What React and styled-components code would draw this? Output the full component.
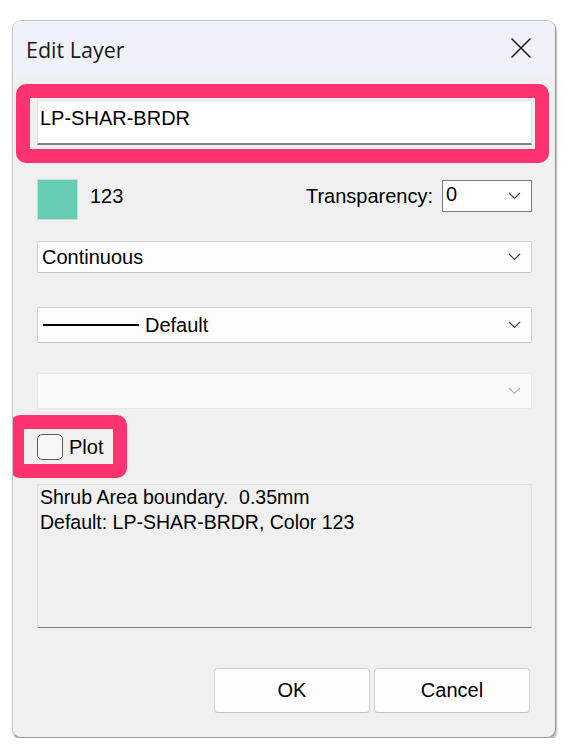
import styled, { createGlobalStyle } from "styled-components";

const GlobalStyle = createGlobalStyle`
  html, body {
    margin: 0;
    padding: 0;
    background: #ffffff;
  }
  body {
    font-family: "Liberation Sans", Arial, sans-serif;
    color: #000;
  }
`;

const PINK = "#ff3370";

function Chevron({ disabled }) {
  return (
    <svg width="13" height="8" viewBox="0 0 13 8">
      <path
        d="M1 1 L6.5 6.5 L12 1"
        fill="none"
        stroke={disabled ? "#b4b4b4" : "#444"}
        strokeWidth="1.2"
      />
    </svg>
  );
}

function CloseIcon() {
  return (
    <svg width="22" height="22" viewBox="0 0 22 22">
      <path
        d="M2 2 L20 20 M20 2 L2 20"
        stroke="#1c1c1c"
        strokeWidth="1.6"
        strokeLinecap="round"
      />
    </svg>
  );
}

export default function App() {
  return (
    <>
      <GlobalStyle />
      <Page>
        <Dialog>
          <TitleBar>
            <Title>Edit Layer</Title>
            <CloseButton>
              <CloseIcon />
            </CloseButton>
          </TitleBar>

          <Body>
            <NameHighlight>
              <NameInput>LP-SHAR-BRDR</NameInput>
            </NameHighlight>

            <ColorRow>
              <Swatch $color="#66cdb4" />
              <Label>123</Label>
              <Spacer />
              <Label>Transparency:</Label>
              <SmallCombo>
                <span>0</span>
                <Chevron />
              </SmallCombo>
            </ColorRow>

            <Combo $top={21} $height={32}>
              <ComboText>Continuous</ComboText>
              <Chevron />
            </Combo>

            <Combo $top={34} $height={36}>
              <ComboText>
                <LineSample />
                Default
              </ComboText>
              <Chevron />
            </Combo>

            <Combo $top={30} $height={36} $disabled>
              <ComboText />
              <Chevron disabled />
            </Combo>

            <PlotHighlight>
              <CheckBox />
              <Label>Plot</Label>
            </PlotHighlight>

            <Description>
              Shrub Area boundary.&nbsp; 0.35mm
              <br />
              Default: LP-SHAR-BRDR, Color 123
            </Description>

            <ButtonRow>
              <Button>OK</Button>
              <Button>Cancel</Button>
            </ButtonRow>
          </Body>
        </Dialog>
      </Page>
    </>
  );
}

const Page = styled.div`
  padding: 20px 0 0 12px;
`;

const Dialog = styled.div`
  width: 542px;
  background: #f0f0f0;
  border: 1px solid #c4c4c4;
  border-right-color: #9a9a9a;
  border-bottom-color: #9a9a9a;
  border-radius: 9px;
  box-shadow: 1px 3px 2px rgba(0, 0, 0, 0.28);
  overflow: hidden;
`;

const TitleBar = styled.div`
  height: 56px;
  background: #eff2f8;
  display: flex;
  align-items: center;
  justify-content: space-between;
  padding: 0 23px 0 13px;
`;

const Title = styled.div`
  font-family: "Open Sans", "Noto Sans", sans-serif;
  font-size: 21.5px;
  color: #1a1a1a;
  margin-top: 1px;
`;

const CloseButton = styled.div`
  display: flex;
  margin-top: -2px;
`;

const Body = styled.div`
  display: flex;
  flex-direction: column;
  padding: 7px 23px 24px 24px;
`;

const NameHighlight = styled.div`
  margin: 0 -17px 0 -21px;
  border: 14px solid ${PINK};
  border-radius: 10px;
  background: #f0f0f0;
  padding: 2px 3px 4px 7px;
`;

const NameInput = styled.div`
  background: #ffffff;
  border: 1px solid #e2e2e2;
  border-bottom: 2px solid #808080;
  box-sizing: border-box;
  height: 45px;
  padding: 6px 0 0 2px;
  font-size: 20px;
`;

const ColorRow = styled.div`
  display: flex;
  align-items: flex-start;
  margin-top: 16px;
  height: 41px;
`;

const Swatch = styled.div`
  width: 41px;
  height: 41px;
  box-sizing: border-box;
  background: ${(p) => p.$color};
  border: 1px solid #d8d8d8;
  margin-right: 12px;
`;

const Label = styled.span`
  font-size: 20px;
  line-height: 34px;
  white-space: nowrap;
`;

const Spacer = styled.div`
  flex: 1;
`;

const SmallCombo = styled.div`
  width: 90px;
  height: 32px;
  box-sizing: border-box;
  margin: 1px 0 0 9px;
  background: #ffffff;
  border: 1px solid #7a7a7a;
  display: flex;
  align-items: center;
  justify-content: space-between;
  padding: 0 10px 0 3px;
  font-size: 20px;

  span {
    margin-top: -4px;
  }
`;

const Combo = styled.div`
  margin-top: ${(p) => p.$top}px;
  height: ${(p) => p.$height}px;
  box-sizing: border-box;
  background: ${(p) => (p.$disabled ? "#f9f9f9" : "#fdfdfd")};
  border: 1px solid ${(p) => (p.$disabled ? "#e9e9e9" : "#d2d2d2")};
  border-bottom-color: ${(p) => (p.$disabled ? "#e9e9e9" : "#c4c4c4")};
  border-radius: 2px;
  display: flex;
  align-items: center;
  justify-content: space-between;
  padding: 0 10px 0 4px;
`;

const ComboText = styled.div`
  display: flex;
  align-items: center;
  font-size: 20px;
`;

const LineSample = styled.span`
  display: inline-block;
  width: 96px;
  height: 2px;
  background: #000;
  margin: 0 6px 0 1px;
`;

const PlotHighlight = styled.div`
  align-self: flex-start;
  margin: 6px 0 0 -27px;
  border: 14px solid ${PINK};
  border-radius: 10px;
  background: #f0f0f0;
  display: flex;
  align-items: center;
  gap: 6px;
  padding: 0 10px 0 13px;
  height: 35px;
`;

const CheckBox = styled.span`
  width: 26px;
  height: 26px;
  box-sizing: border-box;
  border: 1.5px solid #5c5c5c;
  border-radius: 5px;
  background: #f6f6f6;
`;

const Description = styled.div`
  margin-top: 6px;
  height: 144px;
  box-sizing: border-box;
  background: #f0f0f0;
  border: 1px solid #e2e2e2;
  border-bottom: 1px solid #7c7c7c;
  padding: 0 0 0 2px;
  font-size: 19.5px;
  line-height: 25px;
`;

const ButtonRow = styled.div`
  display: flex;
  justify-content: flex-end;
  gap: 4px;
  margin: 40px 2px 0 0;
`;

const Button = styled.div`
  width: 156px;
  height: 45px;
  box-sizing: border-box;
  background: #fdfdfd;
  border: 1px solid #d0d0d0;
  border-bottom-color: #c2c2c2;
  border-radius: 4px;
  display: flex;
  align-items: center;
  justify-content: center;
  font-size: 20px;
`;
